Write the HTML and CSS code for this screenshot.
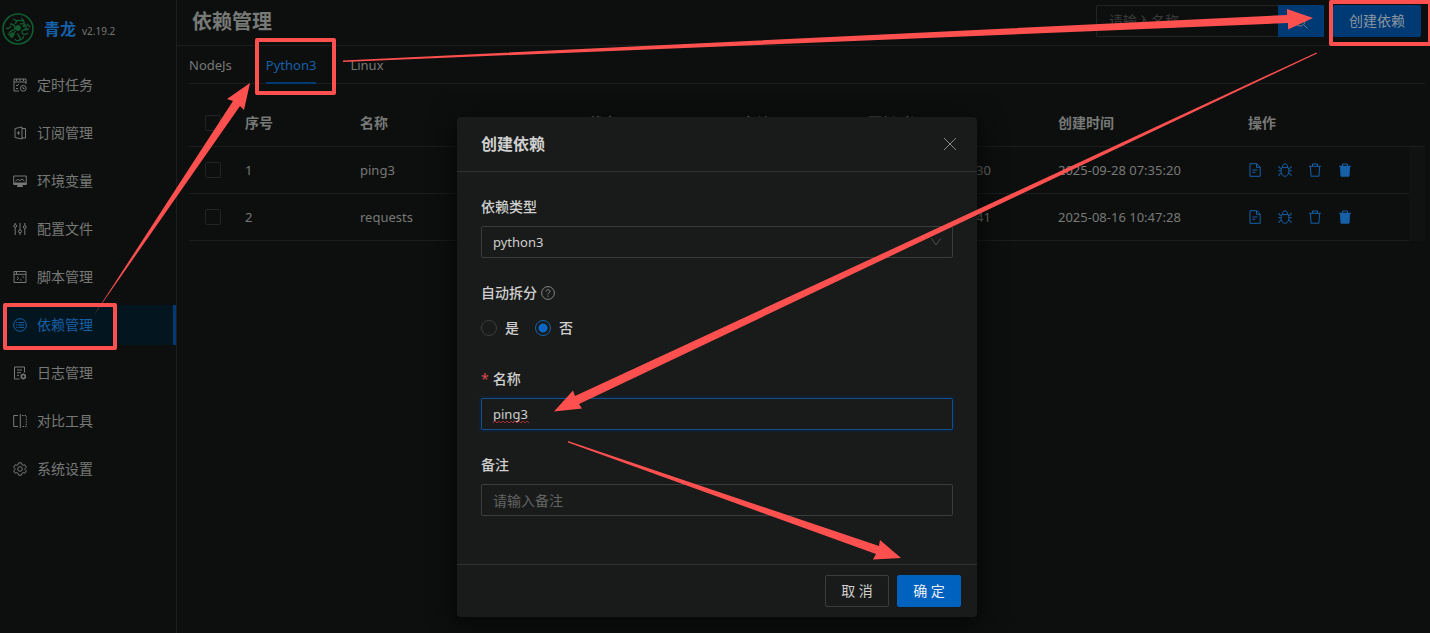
FILE: index.html
```html
<!DOCTYPE html>
<html lang="zh-CN">
<head>
<meta charset="utf-8">
<title>依赖管理 - 青龙</title>
<link rel="stylesheet" href="styles.css">
</head>
<body>
<svg class="defs" aria-hidden="true">
  <symbol id="i-doc" viewBox="0 0 14 14"><path d="M2 .7h6.800L12.200 4v9.300H2zM8.500 1v3.300H12M4.400 7h5M4.400 9.300h3"/></symbol>
  <symbol id="i-bug" viewBox="0 0 14 14"><path d="M3.800 4.600h6.400c.6 1.200.7 2.400.7 3.500 0 3-1.700 5.200-3.900 5.200s-3.900-2.200-3.900-5.200c0-1.100.1-2.300.7-3.500zM4.500 4.300C4.500 2 5.400.8 7 .8s2.500 1.200 2.500 3.500M.2 7.700h3M10.800 7.700h3M1 3v1.700l2.700.9M13 3v1.700l-2.700.9M1 13v-1.600l2.500-1.200M13 13v-1.600l-2.500-1.200"/></symbol>
  <symbol id="i-del" viewBox="0 0 14 14"><path d="M1 3.300h12M2.500 3.500l.5 9.700h8l.5-9.700M4.500 3.100V1h5v2.100"/></symbol>
  <symbol id="i-delf" viewBox="0 0 14 14"><path d="M1 3.300h12M4.500 3.100V1h5v2.100"/><path fill="currentColor" d="M2.500 3.500l.5 9.700h8l.5-9.700z"/></symbol>
</svg>
<div class="app">
  <aside class="sider">
    <div class="brand">
      <svg class="logo" viewBox="0 0 32 32" aria-hidden="true"><circle cx="16" cy="16" r="15" stroke-width="1.600"/><path stroke-width="1.300" d="M11 6l4 2-2 3M13 8c4-2 7 1 9-1M19 5c3 1 1 4 4 5M8 11c3 0 5 1 5 4s-5 2-6 5M4 15c2 1 4 0 5-2M18 11c4-1 7 1 6 4s-4 1-4 4 4 3 6 1M14 18c-3 1-2 5-6 6M6 22c2-2 3 0 2 2M16 20c-1 3 3 3 2 6s-4 2-5 0M22 23c-1 2-2 4-4 4M25 11l3 3M10 25c0-2 2-2 2-4M23 17l4-1"/><circle cx="16" cy="15" r="2.500" fill="currentColor"/><circle cx="10" cy="21" r="1.200" fill="currentColor"/><circle cx="22" cy="13" r="1" fill="currentColor"/></svg>
      <a class="brand-name" href="#">青龙</a><span class="version">v2.19.2</span>
    </div>
    <nav class="menu">
      <a href="#"><svg viewBox="0 0 14 14"><path d="M6 13H1V1h12v5M1 4h12M3.500 1v2M7 1v2M10.500 1v2M3 7l1 1 2-2M3 10.500h2"/><circle cx="10.300" cy="10.300" r="2.900"/><path d="M10 8.800v1.700h1.500"/></svg>定时任务</a>
      <a href="#"><svg viewBox="0 0 14 14"><path d="M2 2.500L9 1v12l-7-1.500zM9 2.500h3.500v9.500H9M3.800 7h3.400M5.500 5.300v3.400"/></svg>订阅管理</a>
      <a href="#"><svg viewBox="0 0 14 14"><path d="M.7 2h12.600v8.500H.7zM2.500 7l2-1.500 2.500 1 2-1.500 2.500 2M4 12.500h6"/><path fill="currentColor" d="M1 9h12v1.500H9V12H5v-1.500H1z"/></svg>环境变量</a>
      <a href="#"><svg viewBox="0 0 14 14"><path d="M2.200 1v1.500M2.200 5.500V13M7 1v6.500M7 11v2M11.800 1v2.500M11.800 6.500V13"/><circle cx="2.200" cy="4" r="1.400"/><circle cx="7" cy="9.300" r="1.500"/><circle cx="11.800" cy="5" r="1.400"/></svg>配置文件</a>
      <a href="#"><svg viewBox="0 0 14 14"><path d="M1 1.500h12v11H1zM1 4.300h12M3.500 1.500v2.500M4 6.700l1.700 1.600L4 10M7 10h1.500M9.500 7h1.500"/></svg>脚本管理</a>
      <a class="active" href="#"><svg viewBox="0 0 14 14"><circle cx="7" cy="7" r="6.300"/><path d="M5.300 4.600H11M5.300 7H11M5.300 9.400H11M3 4.600h1.200M3 7h1.200M3 9.400h1.200"/></svg>依赖管理</a>
      <a href="#"><svg viewBox="0 0 14 14"><path d="M6.500 13H1.500V1h10v5.500M4 4h5M4 6.700h4M4 9.300h2"/><circle cx="10.300" cy="10.500" r="2" stroke-width="1.500"/><path d="M10.300 7.500v1M10.300 12.500v1M7.700 9l.8.500M12.100 11.500l.8.500M7.700 12l.8-.5M12.100 9.500l.8-.5"/></svg>日志管理</a>
      <a href="#"><svg viewBox="0 0 14 14"><path d="M5 1.500H.7v11H5M7.300 0v14"/><path stroke-dasharray="1.500 1" d="M9 1.500h4.300v11H9"/></svg>对比工具</a>
      <a href="#"><svg viewBox="0 0 14 14"><circle cx="7" cy="7" r="2.300"/><path d="M5.600.8h2.800l.5 1.800 1.200.7 1.800-.5 1.400 2.400L12 6.500v1l1.300 1.300-1.400 2.400-1.800-.5-1.200.7-.5 1.800H5.600l-.5-1.800-1.200-.7-1.800.5L.7 8.800 2 7.500v-1L.7 5.200l1.400-2.400 1.800.5 1.200-.7z"/></svg>系统设置</a>
    </nav>
  </aside>
  <main class="main">
    <header class="page-head">
      <h1>依赖管理</h1>
      <form class="search">
        <input type="text" placeholder="请输入名称" aria-label="名称">
        <button type="button" aria-label="搜索"><svg viewBox="0 0 14 14"><circle cx="6" cy="6" r="5"/><path d="M9.700 9.700L13.500 13.500"/></svg></button>
      </form>
      <button class="create" type="button">创建依赖</button>
    </header>
    <div class="content">
      <div class="tabs" role="tablist">
        <button type="button" role="tab">NodeJs</button>
        <button type="button" role="tab" class="on" aria-selected="true">Python3</button>
        <button type="button" role="tab">Linux</button>
      </div>
      <table class="deps">
        <colgroup><col class="c-check"><col class="c-no"><col class="c-name"><col class="c-state"><col class="c-note"><col class="c-time"><col class="c-time"><col><col class="c-bar"></colgroup>
        <thead><tr><th><input type="checkbox" aria-label="全选"></th><th>序号</th><th>名称</th><th>状态</th><th>备注</th><th>更新时间</th><th>创建时间</th><th>操作</th><th></th></tr></thead>
        <tbody>
          <tr><td><input type="checkbox" aria-label="选择 ping3"></td><td>1</td><td>ping3</td><td></td><td></td><td>2025-09-28 07:35:30</td><td>2025-09-28 07:35:20</td>
            <td><div class="ops"><button type="button" aria-label="日志"><svg><use href="#i-doc"/></svg></button><button type="button" aria-label="重新安装"><svg><use href="#i-bug"/></svg></button><button type="button" aria-label="删除"><svg><use href="#i-del"/></svg></button><button type="button" aria-label="强制删除"><svg><use href="#i-delf"/></svg></button></div></td><td class="bar"></td></tr>
          <tr><td><input type="checkbox" aria-label="选择 requests"></td><td>2</td><td>requests</td><td></td><td></td><td>2025-08-16 10:47:41</td><td>2025-08-16 10:47:28</td>
            <td><div class="ops"><button type="button" aria-label="日志"><svg><use href="#i-doc"/></svg></button><button type="button" aria-label="重新安装"><svg><use href="#i-bug"/></svg></button><button type="button" aria-label="删除"><svg><use href="#i-del"/></svg></button><button type="button" aria-label="强制删除"><svg><use href="#i-delf"/></svg></button></div></td><td class="bar"></td></tr>
        </tbody>
      </table>
    </div>
  </main>
</div>

<div class="modal" role="dialog" aria-labelledby="dlg-title">
  <div class="modal-head"><h2 id="dlg-title">创建依赖</h2><button type="button" aria-label="关闭"><svg viewBox="0 0 14 14"><path d="M1 1l12 12M13 1L1 13"/></svg></button></div>
  <form class="modal-body">
    <div class="field">
      <label for="type">依赖类型</label>
      <div class="select"><select id="type"><option>python3</option></select><svg viewBox="0 0 12 12"><path d="M1.500 2.500L6 9l4.500-6.500"/></svg></div>
    </div>
    <fieldset class="field">
      <legend>自动拆分<svg viewBox="0 0 14 14"><circle cx="7" cy="7" r="6.400"/><path d="M5 5.600c0-1.200.9-1.900 2-1.900s2 .7 2 1.700c0 1.400-2 1.400-2 3M7 9.600v1.100"/></svg></legend>
      <div class="radios"><label><input type="radio" name="split">是</label><label><input type="radio" name="split" checked>否</label></div>
    </fieldset>
    <div class="field">
      <label for="name"><span class="req">*</span>名称</label>
      <div class="typed"><input class="focus" id="name" type="text" value="ping3"><svg class="squiggle" viewBox="0 0 36 4"><path d="M0 3l2-2 2 2 2-2 2 2 2-2 2 2 2-2 2 2 2-2 2 2 2-2 2 2 2-2 2 2 2-2 2 2 2-2 2 2"/></svg></div>
    </div>
    <div class="field">
      <label for="note">备注</label>
      <input id="note" type="text" placeholder="请输入备注">
    </div>
  </form>
  <div class="modal-foot"><button type="button">取 消</button><button type="button" class="ok">确 定</button></div>
</div>

<svg class="marks" viewBox="0 0 1430 633" aria-hidden="true">
  <g class="boxes"><rect x="5" y="305" width="110" height="43"/><rect x="257" y="40" width="77" height="53"/><rect x="1331" y="2" width="99" height="42"/></g>
  <path d="M94 315L233 101l-6-2 23-16-6 27-4-4z"/>
  <path d="M343 60.500L1287 15V9l26 9-25 11.500v-6.500L343 62z"/>
  <path d="M1316.500 52.500L575 396l-2-5.500L554 411.500l28-3-3-4.500L1317 53.500z"/>
  <path d="M568 441L879 546l1-6 21 18-28 1.500 3-5.500L568 442.500z"/>
</svg>
</body>
</html>
```

FILE: styles.css
```css
* { box-sizing: border-box; }
body {
  margin: 0;
  min-height: 100vh;
  background: #0d0f0e;
  color: #777977;
  font: 14px/22px "Noto Sans", "Noto Sans CJK SC", sans-serif;
  overflow: hidden;
}
h1, h2 { margin: 0; }
a { color: inherit; text-decoration: none; }
button, input, select { font: inherit; color: inherit; margin: 0; }
button { border: 0; padding: 0; background: none; }
svg { fill: none; stroke: currentColor; stroke-width: 1; flex: none; }
.defs { display: none; }

.app { display: flex; min-height: 100vh; }
.sider { width: 177px; border-right: 1px solid #1c1e1d; flex: none; }
.brand { display: flex; align-items: center; height: 57px; padding-left: 2px; }
.logo { width: 32px; height: 32px; color: #125c2f; }
.brand-name { margin: 0 6px 0 10px; font-size: 16px; font-weight: 700; color: #1660a8; }
.version { font-size: 10px; padding-top: 4px; color: #747675; }
.menu { display: flex; flex-direction: column; gap: 8px; padding-top: 8px; }
.menu a { display: flex; align-items: center; gap: 10px; height: 40px; padding-left: 13px; }
.menu svg { width: 14px; height: 14px; }
.menu .active { background: #03161f; color: #1660a8; border-right: 3px solid #003a75; }

.main { flex: 1; min-width: 0; }
.page-head { display: flex; align-items: center; height: 46px; padding: 0 9px 4px 15px; border-bottom: 1px solid #1c1e1d; }
.page-head h1 { font-size: 20px; line-height: 28px; padding-top: 2px; margin-right: auto; }
.search { display: flex; margin-right: 9px; }
.search input { width: 182px; height: 32px; padding: 0 12px; background: none; border: 1px solid #212423; border-right: 0; border-radius: 2px 0 0 2px; }
.search input::placeholder { color: #393b3a; }
.search button { width: 46px; height: 32px; background: #003a75; }
.search svg { width: 14px; height: 14px; vertical-align: middle; }
.create { height: 32px; padding: 0 16px; background: #003a75; color: #8b96a0; border-radius: 2px; }

.content { padding: 0 5px 0 12px; }
.tabs { display: flex; gap: 34px; height: 38px; border-bottom: 1px solid #1c1e1d; margin-bottom: 16px; }
.tabs button { font-size: 13px; height: 38px; padding-top: 2px; border-bottom: 2px solid transparent; }
.tabs .on { color: #1660a8; border-color: #003a75; }

.deps { width: 100%; table-layout: fixed; border-spacing: 0; }
.deps th, .deps td { height: 47px; padding: 0 8px; text-align: left; border-bottom: 1px solid #1c1e1d; white-space: nowrap; }
.deps td { font-size: 13px; }
.deps .bar { padding: 0; background: #101211; border: 0; }
.deps th { font-weight: 600; }
.deps th:first-child, .deps td:first-child { padding-left: 16px; }
.c-check { width: 48px; }
.c-no { width: 115px; }
.c-name { width: 229px; }
.c-state { width: 154px; }
.c-note { width: 125px; }
.c-time { width: 190px; }
.c-bar { width: 16px; }
.deps input { display: block; appearance: none; width: 16px; height: 16px; border: 1px solid #212423; border-radius: 2px; }
.ops { display: flex; gap: 16px; color: #1660a8; }
.ops button, .ops svg { display: block; width: 14px; height: 14px; }

.modal {
  position: absolute;
  top: 117px;
  left: calc(50% - 258px);
  width: 520px;
  background: #191b1a;
  color: #cfd0cf;
  border-radius: 4px;
  box-shadow: 0 6px 24px 4px #060807;
}
.modal-head { display: flex; justify-content: space-between; align-items: center; height: 55px; padding: 0 20px 0 24px; border-bottom: 1px solid #303231; }
.modal-head h2 { font-size: 16px; font-weight: 600; }
.modal-head svg { display: block; width: 14px; height: 14px; color: #858685; }
.modal-body { display: flex; flex-direction: column; gap: 24px; padding: 24px 24px 48px; }
.field { display: flex; flex-direction: column; gap: 8px; border: 0; margin: 0; padding: 0; min-width: 0; font-weight: 500; }
.field legend { display: flex; align-items: center; gap: 4px; padding: 0; margin-bottom: 8px; }
.field legend svg { width: 14px; height: 14px; color: #858685; }
.field input[type="text"], .field select { display: block; width: 100%; height: 32px; padding: 0 11px; background: none; border: 1px solid #3b3d3c; border-radius: 2px; font-size: 14px; font-weight: 400; outline: 0; }
.field .select select, .field .focus[type="text"] { font-size: 13px; }
.field input::placeholder { color: #626463; }
.field .focus[type="text"] { border-color: #124f8c; box-shadow: 0 0 0 2px #10202f; }
.select { position: relative; }
.select select { appearance: none; }
.select svg { position: absolute; right: 11px; top: 10px; width: 12px; height: 12px; color: #4c4e4d; }
.typed { position: relative; }
.squiggle { position: absolute; left: 12px; top: 22px; width: 36px; height: 4px; color: #a52a33; }
.req { color: #c8474b; margin-right: 4px; }
.radios { display: flex; gap: 16px; height: 32px; align-items: center; }
.radios label { display: flex; align-items: center; gap: 8px; }
.radios input { appearance: none; width: 16px; height: 16px; border: 1px solid #3b3d3c; border-radius: 50%; }
.radios input:checked { border-color: #1260ac; background: radial-gradient(circle, #0a66c4 4px, transparent 5px); }
.modal-foot { display: flex; justify-content: flex-end; gap: 8px; padding: 10px 16px; border-top: 1px solid #303231; }
.modal-foot button { width: 64px; height: 32px; border: 1px solid #3b3d3c; border-radius: 2px; }
.modal-foot .ok { background: #0062bf; border-color: #0062bf; color: #e8eef4; }

.marks { position: absolute; top: 0; left: 0; width: 1430px; height: 633px; fill: #ff5050; stroke: none; pointer-events: none; }
.boxes { fill: none; stroke: #ff5050; stroke-width: 4; stroke-linejoin: round; }
```
